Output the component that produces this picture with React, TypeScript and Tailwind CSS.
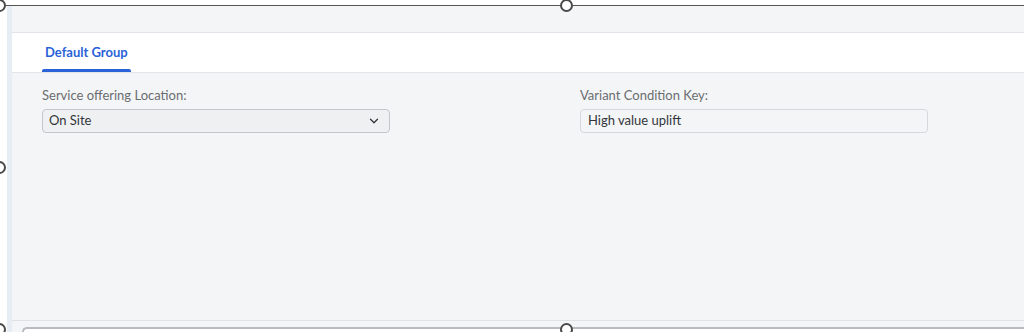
import { ChevronDown } from 'lucide-react';

const Handle = ({ className }: { className: string }) => (
  <div
    className={`absolute w-[13px] h-[13px] rounded-full border-2 border-[#4a4a4a] bg-white ${className}`}
  />
);

const Field = ({ label, children }: { label: string; children: React.ReactNode }) => (
  <div className="w-[348px]">
    <div className="text-[13px] leading-[18px] text-[#6a6d70]">{label}</div>
    <div className="mt-[5px]">{children}</div>
  </div>
);

export default function App() {
  return (
    <div
      className="relative w-[1024px] h-[332px] overflow-hidden bg-white"
      style={{ fontFamily: 'Lato, "Noto Sans", Arial, sans-serif' }}
    >
      <div className="h-[5px] bg-white" />
      <div className="h-px bg-[#555]" />
      <div className="flex h-[326px]">
        <div className="w-[7px] bg-white" />
        <div className="w-[5px] bg-[#e6edf5]" />
        <div className="flex-1 flex flex-col bg-[#f4f5f7]">
          <div className="h-[26px]" />
          <div className="h-[41px] bg-white border-t border-b border-[#e1e4e8] flex items-stretch">
            <div className="ml-[30px] px-[3px] relative flex items-center">
              <span className="text-[13px] font-bold text-[#2a62d8]">Default Group</span>
              <div className="absolute left-0 right-0 bottom-0 h-[3px] rounded-t-[2px] bg-[#2a62d8]" />
            </div>
          </div>
          <div className="flex pl-[30px] pt-[13px] gap-[190px]">
            <Field label="Service offering Location:">
              <div className="h-[24px] rounded-[4px] border border-[#c3c7cc] bg-[#eef0f2] flex items-center justify-between pl-[6px] pr-[8px] text-[13px] text-[#32363a]">
                <span>On Site</span>
                <ChevronDown size={14} strokeWidth={2.2} className="text-[#32363a]" />
              </div>
            </Field>
            <Field label="Variant Condition Key:">
              <div className="h-[24px] rounded-[4px] border border-[#d5d8dc] bg-[#f4f5f7] flex items-center pl-[7px] text-[13px] text-[#32363a]">
                High value uplift
              </div>
            </Field>
          </div>
          <div className="flex-1" />
          <div className="h-px bg-[#dfe2e5]" />
          <div className="h-[6px]" />
          <div className="h-[5px] ml-[10px] border-t-2 border-l-2 border-[#b8bcc0] rounded-tl-[8px] bg-white" />
        </div>
      </div>
      <Handle className="left-[-7px] top-[-1px]" />
      <Handle className="left-[560px] top-[-1px]" />
      <Handle className="left-[-7px] top-[161px]" />
      <Handle className="left-[-7px] top-[323px]" />
      <Handle className="left-[560px] top-[323px]" />
    </div>
  );
}
